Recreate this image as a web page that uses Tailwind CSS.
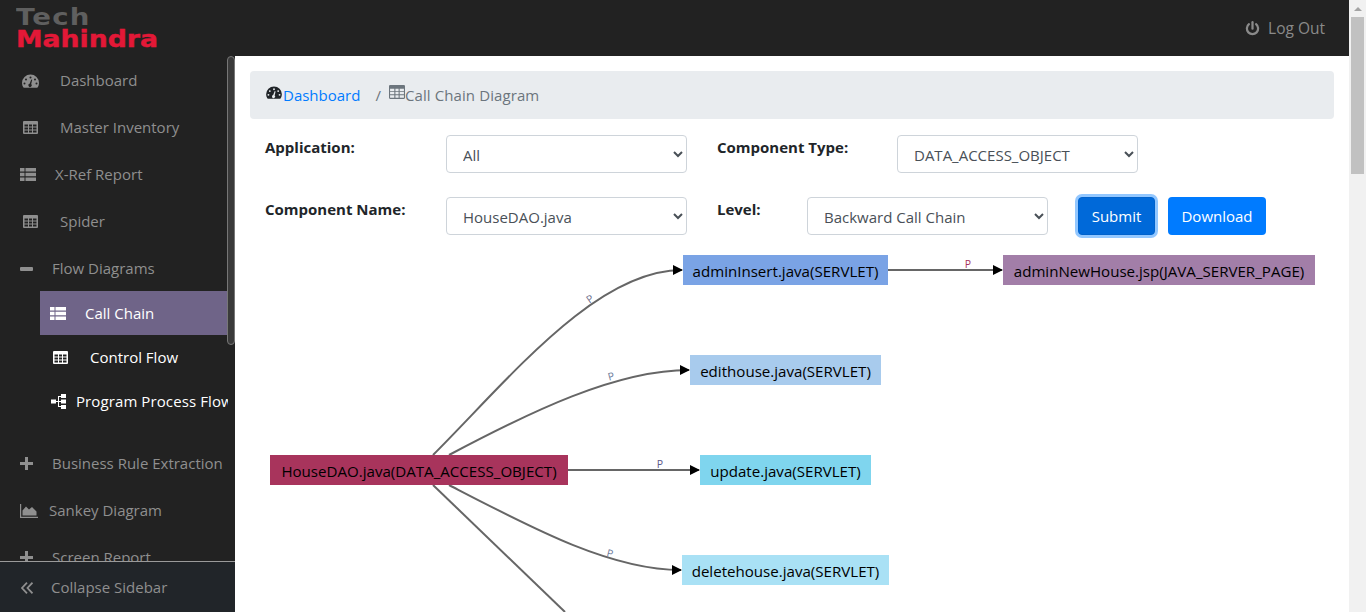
<!DOCTYPE html>
<html lang="en">
<head>
  <meta charset="UTF-8" />
  <meta name="viewport" content="width=device-width, initial-scale=1.0" />
  <title>Call Chain Diagram</title>
  <script src="https://cdn.jsdelivr.net/npm/@tailwindcss/browser@4"></script>
</head>
<body class="h-screen overflow-hidden flex bg-white font-['Open_Sans',sans-serif] text-[15px] text-[#212529]">
  <div class="flex-1 min-w-0 flex flex-col">
    <!-- top bar -->
    <header class="h-14 shrink-0 bg-[#222222] flex items-center justify-between pl-4 pr-6">
      <div class="flex flex-col font-['DejaVu_Sans',sans-serif] font-bold leading-[22px]">
        <span class="text-[#5f5f5f] text-[23px] tracking-[1px] origin-left scale-x-[1.2]">Tech</span>
        <span class="text-[#e31837] text-[23px] origin-left scale-x-[1.16] [-webkit-text-stroke:0.4px_#e31837]">Mahindra</span>
      </div>
      <div class="flex items-center gap-[8px] text-[#8a8a8a] text-[15.500px]">
        <svg class="w-[15px] h-[15px]" viewBox="0 0 16 16" fill="none" stroke="#8a8a8a" stroke-width="2.400" stroke-linecap="round"><path d="M8 1.200v7"/><path d="M4.200 3.400a6 6 0 1 0 7.600 0"/></svg>
        <span class="pt-[1px]">Log Out</span>
      </div>
    </header>

    <div class="flex-1 min-h-0 flex">
      <!-- sidebar -->
      <aside class="w-[235px] shrink-0 bg-[#222222] flex flex-col text-[#8f8f8f]">
        <div class="flex-1 min-h-0 overflow-hidden relative">
          <nav class="w-[228px] pt-[1px]">
            <a class="h-[47px] flex items-center pl-[22px] gap-[21px]">
              <svg class="w-[17px] h-[14px]" viewBox="0 0 17 14" fill="currentColor"><path fill-rule="evenodd" d="M8.5 0.5A8.5 8.5 0 0 0 0 9c0 1.600.4 3 1.200 4.300.2.300.5.400.8.400h13c.3 0 .6-.1.800-.4C16.600 12 17 10.600 17 9A8.500 8.500 0 0 0 8.500.5zM8.500 2.500a1 1 0 1 1 0 2 1 1 0 0 1 0-2zM4 4.500a1 1 0 1 1 0 2 1 1 0 0 1 0-2zM13 4.500a1 1 0 1 1 0 2 1 1 0 0 1 0-2zM2.500 8.500a1 1 0 1 1 0 2 1 1 0 0 1 0-2zM14.500 8.500a1 1 0 1 1 0 2 1 1 0 0 1 0-2zM9.300 5.500l.9.300-1 4.300a1.700 1.700 0 1 1-1.600-.4z"/></svg>
              <span>Dashboard</span>
            </a>
            <a class="h-[47px] flex items-center pl-[23px] gap-[22px]">
              <svg class="w-[15px] h-[13px]" viewBox="0 0 15 13" fill="currentColor"><path fill-rule="evenodd" d="M1 0h13a1 1 0 0 1 1 1v11a1 1 0 0 1-1 1H1a1 1 0 0 1-1-1V1a1 1 0 0 1 1-1zM1.500 3.500v2h3.500v-2zM6 3.500v2h3v-2zM10 3.500v2h3.500v-2zM1.500 6.500v2h3.500v-2zM6 6.500v2h3v-2zM10 6.500v2h3.500v-2zM1.500 9.500v2h3.500v-2zM6 9.500v2h3v-2zM10 9.500v2h3.500v-2z"/></svg>
              <span>Master Inventory</span>
            </a>
            <a class="h-[47px] flex items-center pl-[20px] gap-[19px]">
              <svg class="w-[16px] h-[13px]" viewBox="0 0 16 13" fill="currentColor"><path d="M0 0h4.500v3.500H0zM5.500 0H16v3.500H5.500zM0 4.700h4.500v3.600H0zM5.500 4.700H16v3.600H5.500zM0 9.500h4.500V13H0zM5.500 9.500H16V13H5.500z"/></svg>
              <span>X-Ref Report</span>
            </a>
            <a class="h-[47px] flex items-center pl-[23px] gap-[22px]">
              <svg class="w-[15px] h-[13px]" viewBox="0 0 15 13" fill="currentColor"><path fill-rule="evenodd" d="M1 0h13a1 1 0 0 1 1 1v11a1 1 0 0 1-1 1H1a1 1 0 0 1-1-1V1a1 1 0 0 1 1-1zM1.500 3.500v2h3.500v-2zM6 3.500v2h3v-2zM10 3.500v2h3.500v-2zM1.500 6.500v2h3.500v-2zM6 6.500v2h3v-2zM10 6.500v2h3.500v-2zM1.500 9.500v2h3.500v-2zM6 9.500v2h3v-2zM10 9.500v2h3.500v-2z"/></svg>
              <span>Spider</span>
            </a>
            <a class="h-[47px] flex items-center pl-[20px] gap-[19px]">
              <span class="w-[13px] h-[4px] rounded-[1px] bg-[#8f8f8f]"></span>
              <span>Flow Diagrams</span>
            </a>
            <div class="pl-10 -mt-[1px]">
              <a class="h-[44px] flex items-center pl-[10px] gap-[19px] bg-[#6f6488] text-white">
                <svg class="w-[16px] h-[13px]" viewBox="0 0 16 13" fill="currentColor"><path d="M0 0h4.500v3.500H0zM5.500 0H16v3.500H5.500zM0 4.700h4.500v3.600H0zM5.500 4.700H16v3.600H5.500zM0 9.500h4.500V13H0zM5.500 9.500H16V13H5.500z"/></svg>
                <span>Call Chain</span>
              </a>
              <a class="h-[44px] flex items-center pl-[13px] gap-[22px] text-white">
                <svg class="w-[15px] h-[13px]" viewBox="0 0 15 13" fill="currentColor"><path fill-rule="evenodd" d="M1 0h13a1 1 0 0 1 1 1v11a1 1 0 0 1-1 1H1a1 1 0 0 1-1-1V1a1 1 0 0 1 1-1zM1.500 3.500v2h3.500v-2zM6 3.500v2h3v-2zM10 3.500v2h3.500v-2zM1.500 6.500v2h3.500v-2zM6 6.500v2h3v-2zM10 6.500v2h3.500v-2zM1.500 9.500v2h3.500v-2zM6 9.500v2h3v-2zM10 9.500v2h3.500v-2z"/></svg>
                <span>Control Flow</span>
              </a>
              <a class="h-[44px] flex items-center pl-[11px] gap-[10px] text-white overflow-hidden whitespace-nowrap">
                <svg class="w-[15px] h-[15px] shrink-0" viewBox="0 0 15 15" fill="currentColor"><path d="M0 5.500h5v4H0zM10 0h5v4h-5zM10 5.500h5v4h-5zM10 11h5v4h-5zM5 7h5v1H5zM7 2h3v1H8v9h2v1H7z"/></svg>
                <span class="tracking-[0.1px]">Program Process Flow</span>
              </a>
            </div>
            <a class="mt-[17px] h-[47px] flex items-center pl-[20px] gap-[19px] whitespace-nowrap">
              <svg class="w-[13px] h-[13px]" viewBox="0 0 13 13" fill="currentColor"><path d="M5 0h3v5h5v3H8v5H5V8H0V5h5z"/></svg>
              <span>Business Rule Extraction</span>
            </a>
            <a class="h-[47px] flex items-center pl-[20px] gap-[11px]">
              <svg class="w-[18px] h-[14px]" viewBox="0 0 18 14" fill="currentColor"><path d="M0 0h1.200v12.800H18V14H0z"/><path d="M2.500 11.500V6.500L6 2.500l3 3 3-2.500 4.500 4.500v4z"/></svg>
              <span>Sankey Diagram</span>
            </a>
            <a class="h-[47px] flex items-center pl-[20px] gap-[19px]">
              <svg class="w-[13px] h-[13px]" viewBox="0 0 13 13" fill="currentColor"><path d="M5 0h3v5h5v3H8v5H5V8H0V5h5z"/></svg>
              <span>Screen Report</span>
            </a>
          </nav>
          <!-- sidebar scrollbar thumb -->
          <div class="absolute left-[227px] top-0 w-[8px] h-[289px] rounded-[4px] bg-[#3a3a3a] border border-[#777777]"></div>
        </div>
        <div class="h-[51px] shrink-0 bg-[#212529] border-t border-[#9a9a9a] flex items-center pl-[21px] gap-[18px] pt-[1px]">
          <svg class="w-[12px] h-[12px]" viewBox="0 0 12 12" fill="none" stroke="currentColor" stroke-width="1.800"><path d="M6 .7L1 6l5 5.300M11.500.7L6.500 6l5 5.300"/></svg>
          <span>Collapse Sidebar</span>
        </div>
      </aside>

      <!-- main -->
      <main class="flex-1 min-w-0 overflow-hidden pt-[15px] pl-[15px] pr-[15px]">
        <div class="h-[48px] rounded-[4px] bg-[#e9ecef] flex items-center pl-4 text-[#6c757d]">
          <svg class="w-[16px] h-[13px] -mt-[6px]" viewBox="0 0 17 14" fill="#212529"><path fill-rule="evenodd" d="M8.5 0.5A8.5 8.5 0 0 0 0 9c0 1.600.4 3 1.200 4.300.2.300.5.400.8.400h13c.3 0 .6-.1.800-.4C16.600 12 17 10.600 17 9A8.500 8.500 0 0 0 8.500.5zM8.500 2.500a1 1 0 1 1 0 2 1 1 0 0 1 0-2zM4 4.500a1 1 0 1 1 0 2 1 1 0 0 1 0-2zM13 4.500a1 1 0 1 1 0 2 1 1 0 0 1 0-2zM2.500 8.500a1 1 0 1 1 0 2 1 1 0 0 1 0-2zM14.500 8.500a1 1 0 1 1 0 2 1 1 0 0 1 0-2zM9.300 5.500l.9.300-1 4.300a1.700 1.700 0 1 1-1.600-.4z"/></svg>
          <a class="text-[#007bff] ml-[1px]">Dashboard</a>
          <span class="ml-[15px] mr-[8px]">/</span>
          <svg class="w-[16px] h-[14px] -mt-[6px]" viewBox="0 0 15 13" fill="#6c757d"><path fill-rule="evenodd" d="M1 0h13a1 1 0 0 1 1 1v11a1 1 0 0 1-1 1H1a1 1 0 0 1-1-1V1a1 1 0 0 1 1-1zM1 3.500v2.200h4V3.500zM6 3.500v2.200h3V3.500zM10 3.500v2.200h4V3.500zM1 6.500v2.200h4V6.500zM6 6.500v2.200h3V6.500zM10 6.500v2.200h4V6.500zM1 9.500V12h4V9.500zM6 9.500V12h3V9.500zM10 9.500V12h4V9.500z"/></svg>
          <span class="tracking-[0.1px]">Call Chain Diagram</span>
        </div>

        <form class="pl-[15px] pt-[16px]">
          <div class="flex items-start h-[38px]">
            <label class="w-[181px] font-bold pt-[1px]">Application:</label>
            <select class="w-[241px] h-[38px] pl-3 pr-1 pt-[2px] bg-white border border-[#ced4da] rounded-[4px] text-[#495057]"><option>All</option></select>
            <label class="ml-[30px] w-[180px] font-bold pt-[1px]">Component Type:</label>
            <select class="w-[241px] h-[38px] pl-3 pr-1 pt-[2px] bg-white border border-[#ced4da] rounded-[4px] text-[#495057]"><option>DATA_ACCESS_OBJECT</option></select>
          </div>
          <div class="flex items-start h-[38px] mt-[24px]">
            <label class="w-[181px] font-bold pt-[1px]">Component Name:</label>
            <select class="w-[241px] h-[38px] pl-3 pr-1 pt-[2px] bg-white border border-[#ced4da] rounded-[4px] text-[#495057]"><option>HouseDAO.java</option></select>
            <label class="ml-[30px] w-[90px] font-bold pt-[1px]">Level:</label>
            <select class="w-[241px] h-[38px] pl-3 pr-1 pt-[2px] bg-white border border-[#ced4da] rounded-[4px] text-[#495057]"><option>Backward Call Chain</option></select>
            <button type="button" class="ml-[30px] w-[77px] h-[38px] rounded-[4px] bg-[#0069d9] border border-[#0062cc] text-white ring-[3px] ring-[#268fff]/50">Submit</button>
            <button type="button" class="ml-[13px] w-[98px] h-[38px] rounded-[4px] bg-[#007bff] text-white">Download</button>
          </div>
        </form>

        <!-- call chain diagram, coordinates offset from the page by the svg position -->
        <svg class="block -ml-[15px] mt-[12px]" width="1114" height="365" viewBox="235 247 1114 365" font-family="Open Sans, sans-serif" font-size="15.100">
          <defs>
            <marker id="arrow" markerWidth="10" markerHeight="10" refX="9" refY="5" orient="auto" markerUnits="userSpaceOnUse"><path d="M0 0L10 5L0 10z" fill="#000"/></marker>
          </defs>
          <g fill="none" stroke="#666666" stroke-width="2">
            <path d="M433 455C510 378 596 270 682 270" marker-end="url(#arrow)"/>
            <path d="M449 455C530 412 616 370 689 370" marker-end="url(#arrow)"/>
            <path d="M568 470H699" marker-end="url(#arrow)"/>
            <path d="M449 485C530 527 610 570 681 570" marker-end="url(#arrow)"/>
            <path d="M433 485L565 612"/>
            <path d="M888 270H1002" marker-end="url(#arrow)"/>
          </g>
          <g font-size="10.500" text-anchor="middle">
            <text x="592" y="302" fill="#6b6b8a" transform="rotate(-35 592 302)">P</text>
            <text x="612" y="380" fill="#6b7a9a" transform="rotate(-15 612 380)">P</text>
            <text x="660" y="468" fill="#5a5a8a">P</text>
            <text x="609" y="557" fill="#6b7a9a" transform="rotate(14 609 557)">P</text>
            <text x="968" y="268" fill="#a8335d">P</text>
          </g>
          <g>
            <rect x="270" y="455" width="298" height="30" fill="#a8345c"/>
            <rect x="683" y="255" width="205" height="30" fill="#7aa3e5"/>
            <rect x="1003" y="255" width="312" height="30" fill="#a27ea8"/>
            <rect x="690" y="355" width="191" height="30" fill="#a8cbed"/>
            <rect x="700" y="455" width="171" height="30" fill="#7fd5ee"/>
            <rect x="682" y="555" width="207" height="30" fill="#a9e1f5"/>
          </g>
          <g text-anchor="middle" fill="#000">
            <text x="419" y="477">HouseDAO.java(DATA_ACCESS_OBJECT)</text>
            <text x="785.500" y="277">adminInsert.java(SERVLET)</text>
            <text x="1159" y="277">adminNewHouse.jsp(JAVA_SERVER_PAGE)</text>
            <text x="785.500" y="377">edithouse.java(SERVLET)</text>
            <text x="785.500" y="477">update.java(SERVLET)</text>
            <text x="785.500" y="577">deletehouse.java(SERVLET)</text>
          </g>
        </svg>
      </main>
    </div>
  </div>

  <!-- page scrollbar -->
  <div class="w-[17px] shrink-0 bg-[#f1f1f1] flex flex-col items-center">
    <div class="h-[17px] flex items-center justify-center">
      <div class="w-0 h-0 border-l-[4px] border-r-[4px] border-b-[4px] border-l-transparent border-r-transparent border-b-[#a3a3a3]"></div>
    </div>
    <div class="w-[13px] h-[157px] bg-[#c1c1c1]"></div>
  </div>
</body>
</html>
